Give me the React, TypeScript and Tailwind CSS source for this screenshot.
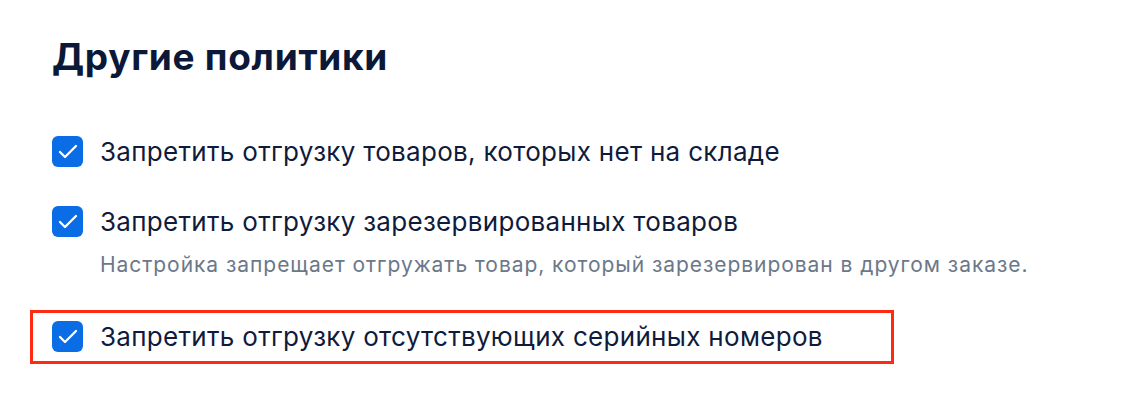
import { Check } from "lucide-react";

type Policy = {
  label: string;
  hint?: string;
  highlighted?: boolean;
};

const policies: Policy[] = [
  { label: "Запретить отгрузку товаров, которых нет на складе" },
  {
    label: "Запретить отгрузку зарезервированных товаров",
    hint: "Настройка запрещает отгружать товар, который зарезервирован в другом заказе.",
  },
  { label: "Запретить отгрузку отсутствующих серийных номеров", highlighted: true },
];

function PolicyRow({ policy }: { policy: Policy }) {
  return (
    <div className="flex items-start gap-[17px]">
      <span className="flex h-[31px] w-[31px] shrink-0 items-center justify-center rounded-[6px] bg-[#0b6de6]">
        <Check className="h-6 w-6 text-white" strokeWidth={2.3} />
      </span>
      <div className="flex flex-col">
        <span className="text-[26px] leading-[32px] tracking-[0.3px] text-[#0f1b3d]">{policy.label}</span>
        {policy.hint && (
          <span className="mt-[14px] text-[21px] leading-[26px] tracking-[0.95px] text-[#6b7889]">
            {policy.hint}
          </span>
        )}
      </div>
    </div>
  );
}

export default function App() {
  return (
    <div className="h-[420px] w-[1130px] bg-white pl-[52px] pt-[35px] font-['Inter',sans-serif]">
      <h2 className="text-[37px] font-bold leading-[44px] tracking-[0.7px] text-[#0c1838]">Другие политики</h2>
      <div className="mt-[57px] flex flex-col">
        {policies.map((policy, i) =>
          policy.highlighted ? (
            <div
              key={i}
              className="-ml-[22px] mt-[32px] w-[864px] border-[3px] border-[#ff2a12] py-[8px] pl-[19px]"
            >
              <PolicyRow policy={policy} />
            </div>
          ) : (
            <div key={i} className={i > 0 ? "mt-[38px]" : ""}>
              <PolicyRow policy={policy} />
            </div>
          )
        )}
      </div>
    </div>
  );
}
